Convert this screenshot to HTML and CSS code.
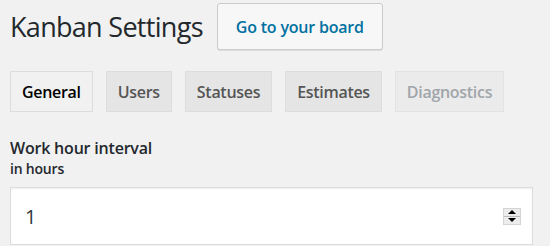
FILE: index.html
```html
<!DOCTYPE html>
<html lang="en">
<head>
    <meta charset="UTF-8">
    <meta name="viewport" content="width=device-width, initial-scale=1.0">
    <title>Kanban Settings</title>

    <link rel="stylesheet" href="styles.css">
</head>
<body>
    <div class="wrap">
        <div class="header">
            <h1 class="title">Kanban Settings</h1>
            <a class="btn-board" href="#">Go to your board</a>
        </div>

        <div class="tabs">
            <a class="tab active" href="#">General</a>
            <a class="tab" href="#">Users</a>
            <a class="tab" href="#">Statuses</a>
            <a class="tab" href="#">Estimates</a>
            <a class="tab disabled" href="#">Diagnostics</a>
        </div>

        <div class="field">
            <label for="hour-interval" class="label">Work hour interval</label>
            <div class="hint">in hours</div>
            <div class="input-box">
                <input id="hour-interval" type="text" class="input" value="1">
                <div class="spinner">
                    <span class="up"></span>
                    <span class="down"></span>
                </div>
            </div>
        </div>
    </div>
</body>
</html>
```

FILE: styles.css
```css
body {
    margin: 0;
    background-color: #f1f1f1;
    font-family: "Open Sans", "Noto Sans", sans-serif;
    color: #23282d;
}

.wrap {
    padding: 3px 17px 0 10px;
}

.header {
    display: flex;
    align-items: center;
}

.title {
    margin: 0;
    font-size: 27px;
    font-weight: 400;
    letter-spacing: -0.7px;
    color: #23282d;
}

.btn-board {
    margin-left: 14px;
    height: 45px;
    padding: 0 18px;
    display: flex;
    align-items: center;
    background-color: #f7f7f7;
    border: 1px solid #ccc;
    border-radius: 3px;
    box-shadow: 0 1px 0 #ddd;
    color: #0071a1;
    font-size: 16px;
    font-weight: 600;
    text-decoration: none;
    letter-spacing: -0.2px;
}

.tabs {
    display: flex;
    gap: 13px;
    margin-top: 21px;
}

.tab {
    height: 39px;
    padding: 0 11px;
    display: flex;
    align-items: center;
    background-color: #e5e5e5;
    border: 1px solid #ddd;
    color: #555;
    font-size: 16px;
    font-weight: 600;
    text-decoration: none;
    letter-spacing: -0.3px;
}

.tab.active {
    background-color: #f1f1f1;
    color: #000;
}

.tab.disabled {
    background-color: #ebebeb;
    color: #a0a5aa;
    border-color: #e3e3e3;
}

.field {
    margin-top: 25px;
}

.label {
    display: block;
    font-size: 16px;
    font-weight: 600;
    color: #23282d;
    letter-spacing: -0.2px;
}

.hint {
    font-size: 14px;
    font-weight: 600;
    color: #23282d;
    letter-spacing: -0.2px;
}

.input-box {
    margin-top: 9px;
    height: 56px;
    display: flex;
    align-items: center;
    background-color: #fff;
    border: 1px solid #ddd;
    box-shadow: inset 0 1px 2px rgba(0, 0, 0, 0.07);
}

.input {
    flex: 1;
    border: none;
    outline: none;
    background: transparent;
    padding: 0 0 0 14px;
    font-family: inherit;
    font-size: 20px;
    color: #32373c;
}

.spinner {
    width: 16px;
    height: 15px;
    margin-right: 11px;
    display: flex;
    flex-direction: column;
    border: 1px solid #d4d4d4;
    background-color: #ececec;
}

.spinner span {
    flex: 1;
    display: flex;
    justify-content: center;
    align-items: center;
}

.spinner .up {
    border-bottom: 1px solid #bbb;
}

.spinner .up::after,
.spinner .down::after {
    content: "";
    border-left: 4px solid transparent;
    border-right: 4px solid transparent;
}

.spinner .up::after {
    border-bottom: 4px solid #000;
}

.spinner .down::after {
    border-top: 4px solid #000;
}
```
